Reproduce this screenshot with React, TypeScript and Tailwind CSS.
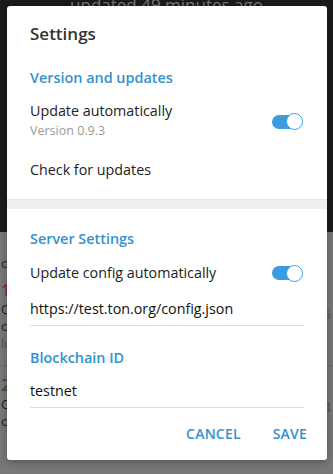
import React from "react";

const font = { fontFamily: '"Open Sans", "Noto Sans", sans-serif' };

function Toggle() {
  return (
    <div className="relative w-[31px] h-[17px] flex items-center">
      <div className="w-[29px] h-[14px] rounded-full bg-[#3b9de0]" />
      <div className="absolute right-0 top-0 w-[17px] h-[17px] rounded-full bg-white border-[1.5px] border-[#3b9de0]" />
    </div>
  );
}

function SectionTitle({ children, className }: { children: React.ReactNode; className?: string }) {
  return (
    <div className={"h-[24px] leading-[24px] text-[14.4px] font-semibold text-[#3391cf] " + (className || "")}>
      {children}
    </div>
  );
}

// the wallet screen behind the dialog, dimmed
function Backdrop() {
  return (
    <div className="absolute inset-0 flex flex-col">
      <div className="h-[232px] bg-[#1b1b1b] flex justify-center">
        <span className="text-[17px] leading-[14px] text-[#7a7a7a] -mt-[2px]">updated 49 minutes ago</span>
      </div>
      <div className="flex-1 bg-[#787878] text-[13px] text-[#1e1e1e]">
        <div className="flex justify-between pt-[23px] pl-[1px] pr-[2px]">
          <div className="flex flex-col leading-[17px]">
            <span>o</span>
            <span className="mt-[9px] text-[17px] font-semibold text-[#8a3030]">1</span>
            <span className="mt-[3px]">QA</span>
            <span>oy</span>
            <span className="text-[#555]">lc</span>
          </div>
          <span className="mt-[50px] text-[#555]">=5</span>
        </div>
        <div className="mt-[13px] border-t border-[#6c6c6c] flex justify-between pt-[10px] pl-[1px] pr-[2px]">
          <div className="flex flex-col leading-[17px]">
            <span className="text-[17px] font-semibold text-[#2e5a2e]">2</span>
            <span className="mt-[3px]">QI</span>
            <span>ot</span>
          </div>
          <span className="mt-[22px] text-[#555]">=4</span>
        </div>
      </div>
    </div>
  );
}

export default function App() {
  return (
    <div className="relative w-[333px] h-[474px] overflow-hidden" style={font}>
      <Backdrop />
      <div className="absolute left-[7px] top-[6px] w-[320px] h-[454px] bg-white rounded-[3px] shadow-[0_2px_8px_rgba(0,0,0,0.3)] flex flex-col">
        <div className="px-[23px]">
          <div className="pt-[16px] h-[40px] leading-[24px] text-[17px] font-semibold text-[#333]">Settings</div>
          <SectionTitle className="mt-[20px]">Version and updates</SectionTitle>
          <div className="mt-[11px] flex items-center justify-between pr-[1px]">
            <div className="flex flex-col">
              <span className="h-[20px] leading-[20px] text-[14.3px] text-[#222]">Update automatically</span>
              <span className="mt-[2px] h-[16px] leading-[16px] text-[12.5px] text-[#9a9a9a]">Version 0.9.3</span>
            </div>
            <div className="mt-[3px]">
              <Toggle />
            </div>
          </div>
          <div className="mt-[21px] h-[20px] leading-[20px] text-[14.3px] text-[#222]">Check for updates</div>
        </div>
        <div className="mt-[19px] h-[10px] bg-[#efefef] border-t border-[#e6e6e6]" />
        <div className="px-[23px]">
          <SectionTitle className="mt-[18px]">Server Settings</SectionTitle>
          <div className="mt-[12px] flex items-center justify-between pr-[1px]">
            <span className="h-[20px] leading-[20px] text-[14.3px] text-[#222]">Update config automatically</span>
            <Toggle />
          </div>
          <div className="mt-[16px] pb-[6px] border-b border-[#dcdcdc] h-[27px] leading-[20px] text-[14.3px] text-[#111]">
            https://test.ton.org/config.json
          </div>
          <SectionTitle className="mt-[20px]">Blockchain ID</SectionTitle>
          <div className="mt-[11px] pb-[6px] border-b border-[#dcdcdc] h-[27px] leading-[20px] text-[14.3px] text-[#111]">
            testnet
          </div>
          <div className="mt-[16px] flex justify-end gap-[32px] -mr-[3px]">
            <button className="h-[20px] leading-[20px] text-[14px] font-semibold text-[#3391cf] tracking-[0.2px]">CANCEL</button>
            <button className="h-[20px] leading-[20px] text-[14px] font-semibold text-[#3391cf] tracking-[0.2px]">SAVE</button>
          </div>
        </div>
      </div>
    </div>
  );
}
